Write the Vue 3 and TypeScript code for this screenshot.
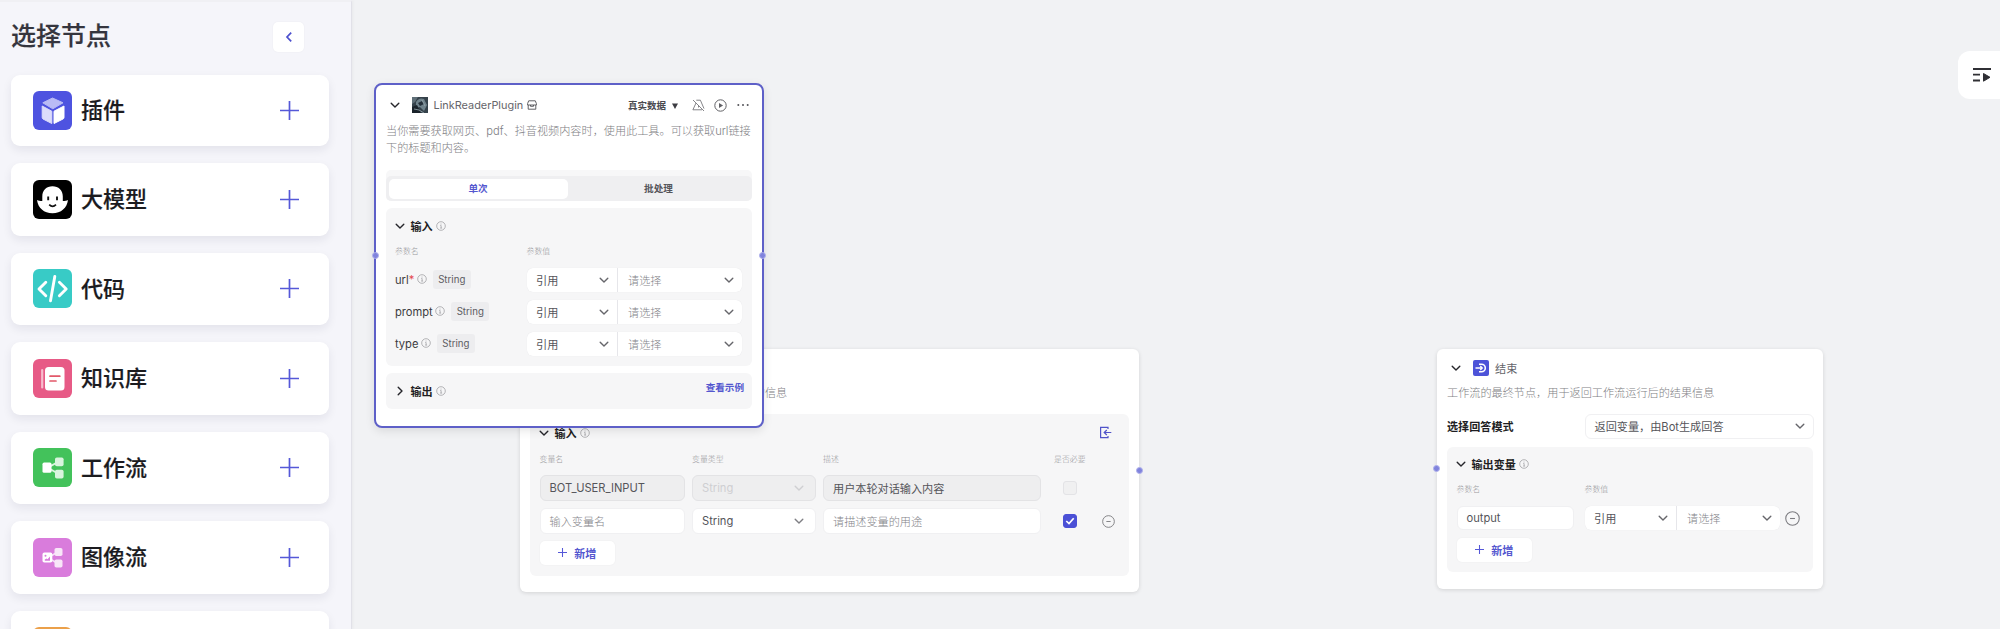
<script setup lang="ts">
import { h, type FunctionalComponent } from 'vue'

interface PaletteItem {
  kind: string
  label: string
}

const palette: PaletteItem[] = [
  { kind: 'plugin', label: '插件' },
  { kind: 'llm', label: '大模型' },
  { kind: 'code', label: '代码' },
  { kind: 'knowledge', label: '知识库' },
  { kind: 'workflow', label: '工作流' },
  { kind: 'imageflow', label: '图像流' },
  { kind: 'other', label: '' },
]

const params: string[] = ['url', 'prompt', 'type']

const Chevron: FunctionalComponent<{ size?: number }> = (props) =>
  h('svg', { width: props.size ?? 10, height: props.size ?? 10, viewBox: '0 0 10 10', fill: 'none' }, [
    h('path', {
      d: 'M1.2 3.2 5 7l3.8-3.8',
      stroke: 'currentColor',
      'stroke-width': 1.4,
      'stroke-linecap': 'round',
      'stroke-linejoin': 'round',
    }),
  ])
Chevron.props = ['size']

const Info: FunctionalComponent = () =>
  h('svg', { width: 10, height: 10, viewBox: '0 0 10 10', fill: 'none', stroke: '#9c9ca0', 'stroke-width': 0.75 }, [
    h('circle', { cx: 5, cy: 5, r: 4.3 }),
    h('path', { d: 'M4.3 4.5H5.1V7M4.2 7.1h1.9M5 2.6v.9' }),
  ])

const Minus: FunctionalComponent<{ size?: number }> = (props) =>
  h('svg', { width: props.size ?? 13, height: props.size ?? 13, viewBox: '0 0 14 14', fill: 'none', stroke: '#7c7c80', 'stroke-width': 1 }, [
    h('circle', { cx: 7, cy: 7, r: 6.3 }),
    h('path', { d: 'M4.7 7h4.6' }),
  ])
Minus.props = ['size']

const Plus: FunctionalComponent<{ size?: number }> = (props) =>
  h('svg', { width: props.size ?? 9, height: props.size ?? 9, viewBox: '0 0 18 18', fill: 'none', stroke: '#5558d8' }, [
    h('path', { d: 'M9 0v18M0 9h18', 'stroke-width': (props.size ?? 9) > 12 ? 1.6 : 2.1 }),
  ])
Plus.props = ['size']
</script>

<template>
  <div class="app">
    <aside class="sidebar">
      <header class="side-head">
        <h1>选择节点</h1>
        <button class="collapse" type="button">
          <svg width="8" height="12" viewBox="0 0 8 12" fill="none">
            <path d="M6.2 1.6 2 6l4.2 4.4" stroke="#4d50ce" stroke-width="1.7" />
          </svg>
        </button>
      </header>
      <div class="palette">
        <div v-for="item in palette" :key="item.kind" class="entry">
          <svg class="entry-icon" viewBox="0 0 39 39">
            <g v-if="item.kind === 'plugin'">
              <rect width="39" height="39" rx="6" fill="#4e53e0" />
              <path d="M19.5 7 30 11.8 19.8 17.8 9.8 11.8Z" fill="#b9bbf5" stroke="#b9bbf5" stroke-width="1" stroke-linejoin="round" />
              <path d="M9.2 15 18.8 20.2V32.5L10 28Q9.2 27.5 9.2 26.5Z" fill="#dcdcfb" stroke="#dcdcfb" stroke-width="1" stroke-linejoin="round" />
              <path d="M31 15 21 20.2V32.5L30 28Q31 27.5 31 26.5Z" fill="#fff" stroke="#fff" stroke-width="1" stroke-linejoin="round" />
            </g>
            <g v-else-if="item.kind === 'llm'">
              <rect width="39" height="39" rx="6" fill="#000" />
              <path d="M9.3 21V16.5C9.3 10.2 13.5 6.2 19.5 6.2S29.8 10.2 29.8 16.5V21C32 21 33.7 20.6 35 20C34 28 28 33.2 19.5 33.2S5 28 4 20C5.4 20.6 7.3 21 9.3 21Z" fill="#fff" />
              <path d="M15.2 16.6v3.6M24 16.6v3.6" stroke="#111" stroke-width="1.9" />
              <path d="M16.2 24.6Q19.6 28 23 24.6" stroke="#111" stroke-width="1.6" fill="none" />
            </g>
            <g v-else-if="item.kind === 'code'">
              <rect width="39" height="39" rx="6" fill="#38cbc6" />
              <path d="M12.8 13.3 6 20l6.8 6.7M26.4 13.3 33.2 20l-6.8 6.7M21.8 7.5 17.5 31.8" fill="none" stroke="#fff" stroke-width="2.9" stroke-linecap="round" stroke-linejoin="round" />
            </g>
            <g v-else-if="item.kind === 'knowledge'">
              <rect width="39" height="39" rx="6" fill="#e75a86" />
              <path d="M9.2 11v17.5" stroke="#f8bccd" stroke-width="2.2" stroke-linecap="round" />
              <rect x="12" y="8" width="19.5" height="23.5" rx="3.5" fill="#fff" />
              <path d="M17 17.2h9.8M17 22h6" stroke="#e2586a" stroke-width="1.7" stroke-linecap="round" />
            </g>
            <g v-else-if="item.kind === 'workflow'">
              <rect width="39" height="39" rx="6" fill="#43c25b" />
              <path d="M17 18.5 24 14.5M17 21 24 25" stroke="#dcf5e0" stroke-width="2" />
              <rect x="22" y="9.5" width="8.6" height="8.8" rx="1.8" fill="#d9f4de" />
              <rect x="22" y="21.8" width="8.6" height="8.8" rx="1.8" fill="#d9f4de" />
              <rect x="9.5" y="14.6" width="9" height="10.2" rx="1.6" fill="#fff" />
            </g>
            <g v-else-if="item.kind === 'imageflow'">
              <rect width="39" height="39" rx="6" fill="#d97cdc" />
              <path d="M17 18.5 24 14.5M17 21 24 25" stroke="#f6def7" stroke-width="1.7" />
              <rect x="21.5" y="10" width="8" height="8" rx="1.8" fill="#f8e6f8" />
              <rect x="21.5" y="21.5" width="8" height="8" rx="1.8" fill="#f8e6f8" />
              <rect x="9.5" y="14.6" width="9.8" height="10" rx="1.8" fill="#fff" />
              <circle cx="12.5" cy="17.8" r="1" fill="#d97cdc" />
              <path d="M11.8 22.8V21.5L13.5 20.5 14.5 21.3 17 18.5V22.8Z" fill="#d97cdc" />
            </g>
            <rect v-else width="39" height="39" rx="6" fill="#eba04a" />
          </svg>
          <span class="entry-label">{{ item.label }}</span>
          <Plus class="entry-add" :size="19" />
        </div>
      </div>
    </aside>

    <main class="canvas">
      <section class="node start">
        <div class="node-head"><Chevron class="dark" /><span class="node-title">开始</span></div>
        <p class="desc">工作流的起始节点，用于设定启动工作流需要的信息</p>
        <div class="panel">
          <div class="panel-head">
            <Chevron class="dark" /><b>输入</b><Info />
            <svg class="import" width="13" height="13" viewBox="0 0 13 13" fill="none" stroke="#5053c9" stroke-width="1.2">
              <path d="M9 3V1.3H1.6V11.7H9V10M12.3 6.5H5.5M7.8 4 5.2 6.5 7.8 9" />
            </svg>
          </div>
          <div class="vars labels">
            <span>变量名</span><span>变量类型</span><span>描述</span><span class="req">是否必要</span>
          </div>
          <div class="vars first">
            <div class="field off">BOT_USER_INPUT</div>
            <div class="field off faint">String<Chevron /></div>
            <div class="field off">用户本轮对话输入内容</div>
            <i class="check"></i>
          </div>
          <div class="vars second">
            <div class="field hint">输入变量名</div>
            <div class="field">String<Chevron /></div>
            <div class="field hint">请描述变量的用途</div>
            <i class="check on">
              <svg width="10" height="8" viewBox="0 0 10 8" fill="none"><path d="M1.3 4 4 6.6 8.7 1.3" stroke="#fff" stroke-width="1.7" /></svg>
            </i>
            <Minus class="remove" />
          </div>
          <button class="add" type="button"><Plus />新增</button>
        </div>
        <i class="port right"></i>
      </section>

      <section class="node plugin">
        <div class="node-head">
          <Chevron class="dark" />
          <svg class="avatar" width="16" height="16" viewBox="0 0 16 16">
            <rect width="16" height="16" fill="#35424b" />
            <path d="M0 0h6L3 5 0 7Z" fill="#5f6f78" />
            <path d="M4 5Q7 0 12 2L15 8 12 14 8 10 4 11Z" fill="#6f828b" />
            <path d="M6 6 10 4 12 7 8 9Z" fill="#25303a" />
            <path d="M0 10 5 8 9 16H0Z" fill="#1a232b" />
            <path d="M2 12 7 13 12 16M10 3 13 9" stroke="#9aabb1" stroke-width=".8" fill="none" />
          </svg>
          <span class="node-title">LinkReaderPlugin</span>
          <svg class="store" width="10" height="10" viewBox="0 0 10 10" fill="none" stroke="#505055" stroke-width=".9">
            <path d="M1.7 .8h6.6L9.4 3.6V5H.6V3.6ZM1.2 5V9.2H8.8V5M3.5 5v1.3h3V5" stroke-linejoin="round" />
          </svg>
          <span class="source">真实数据</span>
          <svg class="tri" width="6" height="6" viewBox="0 0 6 6"><path d="M0 .5H6L3 6Z" fill="#3c3c42" /></svg>
          <svg class="mute" width="13" height="13" viewBox="0 0 13 13" fill="none" stroke="#77777c" stroke-width=".9">
            <path d="M1 1 12 12M4 4 .9 10.8H10M4.3 1.2H8.4L12 9.600M6.500 6.500V8.500" />
          </svg>
          <svg class="play" width="13" height="13" viewBox="0 0 13 13" fill="none" stroke="#606065" stroke-width="1">
            <circle cx="6.5" cy="6.5" r="5.7" /><path d="M5 4.100 9.100 6.500 5 8.900Z" fill="#606065" stroke="none" />
          </svg>
          <svg class="more" width="12" height="4" viewBox="0 0 12 4" fill="#55555a">
            <circle cx="1.3" cy="2" r="1" /><circle cx="6" cy="2" r="1" /><circle cx="10.7" cy="2" r="1" />
          </svg>
        </div>
        <p class="desc">当你需要获取网页、pdf、抖音视频内容时，使用此工具。可以获取url链接下的标题和内容。</p>
        <div class="tabs-wrap">
          <div class="tabs"><span class="tab active">单次</span><span class="tab">批处理</span></div>
        </div>
        <div class="panel inputs">
          <div class="panel-head"><Chevron class="dark" /><b>输入</b><Info /></div>
          <div class="pair labels"><span>参数名</span><span>参数值</span></div>
          <div v-for="name in params" :key="name" class="pair param">
            <div class="param-name">
              <span>{{ name }}<em v-if="name === 'url'">*</em></span><Info /><span class="tag">String</span>
            </div>
            <div class="selects">
              <div class="select mode">引用<Chevron /></div>
              <div class="select value">请选择<Chevron /></div>
            </div>
          </div>
        </div>
        <div class="panel outputs">
          <Chevron class="dark closed" /><b>输出</b><Info />
          <a class="example">查看示例</a>
        </div>
        <i class="port left"></i>
        <i class="port right"></i>
      </section>

      <section class="node end">
        <div class="node-head">
          <Chevron class="dark" />
          <svg class="avatar" width="16" height="16" viewBox="0 0 16 16" fill="none" stroke="#fff">
            <rect width="16" height="16" rx="2" fill="#4d53d8" stroke="none" />
            <path d="M6 4.2H8.5A3.8 3.8 0 0 1 8.5 11.8H6" stroke-width="1.6" />
            <path d="M2.5 8H9M7.300 6 9.300 8 7.300 10" stroke-width="1.3" />
          </svg>
          <span class="node-title">结束</span>
        </div>
        <p class="desc">工作流的最终节点，用于返回工作流运行后的结果信息</p>
        <div class="answer">
          <b>选择回答模式</b>
          <div class="answer-select">返回变量，由Bot生成回答<Chevron /></div>
        </div>
        <div class="panel">
          <div class="panel-head"><Chevron class="dark" /><b>输出变量</b><Info /></div>
          <div class="pair labels"><span>参数名</span><span>参数值</span></div>
          <div class="pair out">
            <div class="field">output</div>
            <div class="selects">
              <div class="select mode">引用<Chevron /></div>
              <div class="select value">请选择<Chevron /></div>
            </div>
            <Minus class="remove" :size="15" />
          </div>
          <button class="add" type="button"><Plus />新增</button>
        </div>
        <i class="port left"></i>
      </section>

      <button class="dock" type="button">
        <svg width="20" height="16" viewBox="0 0 20 16" fill="none" stroke="#303035" stroke-width="1.9">
          <path d="M1 2h18M1 7.6h7M1 13.5h7" />
          <path d="M11.5 6.5 18 10.3 11.5 14.2Z" fill="#303035" stroke-width="1" stroke-linejoin="round" />
        </svg>
      </button>
    </main>
  </div>
</template>

<style>
body {
  overflow: hidden;
  background: #fff;
}
</style>

<style scoped>
* {
  box-sizing: border-box;
}
.app {
  display: flex;
  width: 2000px;
  height: 629px;
  overflow: hidden;
  background: #f1f2f4;
  font-family: Inter, "Noto Sans CJK SC", sans-serif;
  color: #55555a;
}
button {
  border: 0;
  padding: 0;
  font: inherit;
}
svg {
  display: block;
  flex: none;
}
.sidebar {
  flex: none;
  width: 352px;
  height: 630px;
  border-top: 2px solid #f0f0f4;
  border-right: 1px solid #e1e1e8;
  background: #f5f5fa;
  box-shadow: 1px 0 3px rgba(0, 0, 0, 0.04);
}
.side-head {
  display: flex;
  align-items: flex-start;
  justify-content: space-between;
  height: 73px;
  padding: 20px 47px 0 11px;
}
h1 {
  margin: -1.5px 0 0;
  font-size: 25px;
  font-weight: 500;
  line-height: 30px;
  color: #35353e;
  -webkit-text-stroke: 0.2px currentColor;
}
.collapse {
  display: flex;
  align-items: center;
  justify-content: center;
  width: 31px;
  height: 30px;
  border-radius: 5px;
  background: #fff;
  box-shadow: 0 0 2px rgba(0, 0, 0, 0.05);
}
.palette {
  display: flex;
  flex-direction: column;
  gap: 17px;
  padding-left: 10.5px;
}
.entry {
  display: flex;
  flex: none;
  align-items: center;
  width: 318px;
  height: 72.5px;
  padding: 0 30px 0 22.5px;
  border-radius: 9px;
  background: #fff;
  box-shadow: 0 4px 10px rgba(30, 30, 60, 0.08);
}
.entry:first-child {
  height: 71.2px;
  padding-bottom: 1px;
}
.entry-icon {
  width: 39px;
  height: 39px;
}
.entry-label {
  margin-left: 9px;
  font-size: 22px;
  font-weight: 500;
  line-height: 30px;
  color: #1b1b1f;
  -webkit-text-stroke: 0.2px currentColor;
}
.entry-add {
  margin-left: auto;
}
.canvas {
  position: relative;
  flex: 1;
}
.node {
  position: absolute;
  border-radius: 6px;
  background: #fff;
  box-shadow: 0 1px 4px rgba(0, 0, 0, 0.13);
  font-size: 11.15px;
}
.start {
  left: 168px;
  top: 349px;
  width: 619px;
  height: 243px;
  padding: 9px 10px 0;
}
.plugin {
  left: 22px;
  top: 83px;
  width: 390px;
  height: 345px;
  padding: 11px 10px 0;
  border: 2px solid #5e60c8;
  border-radius: 8px;
  box-shadow: 0 3px 10px rgba(0, 0, 0, 0.1);
}
.end {
  left: 1085px;
  top: 349px;
  width: 386px;
  height: 240px;
  padding: 10px 10px 0;
}
.node-head {
  display: flex;
  align-items: center;
  height: 18px;
  padding-left: 4px;
}
.dark {
  color: #26262b;
}
.avatar {
  margin-left: 11.5px;
}
.node-title {
  margin-left: 6px;
  font-size: 11.15px;
  color: #65656a;
}
.plugin .node-title {
  font-size: 10.9px;
}
.end .node-title {
  margin-left: 6.5px;
}
.store {
  margin-left: 4px;
}
.source {
  margin-left: auto;
  font-size: 9.5px;
  font-weight: 600;
  color: #4a4a50;
}
.tri {
  margin: 1px 0 0 6px;
}
.mute {
  margin-left: 14px;
}
.play {
  margin-left: 9px;
}
.more {
  margin: 0 3px 0 10px;
}
.desc {
  margin: 0;
  font-weight: 300;
  line-height: 17.5px;
  color: #808084;
  white-space: nowrap;
}
.start .desc {
  margin-top: 9px;
  padding-left: 1px;
}
.end .desc {
  margin-top: 8px;
}
.plugin .desc {
  padding-top: 8.5px;
  white-space: normal;
  width: 370px;
}
.tabs-wrap {
  height: 31px;
  margin-top: 12.5px;
  padding-top: 6px;
  border-radius: 5px;
  background: #f7f7f8;
}
.tabs {
  display: flex;
  height: 25px;
  padding: 3px 2.5px 2.5px;
  border-radius: 5px;
  background: #efeff1;
}
.tab {
  flex: 1;
  font-size: 9.6px;
  font-weight: 600;
  line-height: 19px;
  text-align: center;
  border-radius: 5px;
}
.active {
  flex: none;
  width: 179px;
  background: #fff;
  color: #5457cf;
}
.panel {
  border-radius: 6px;
  background: #f6f6f7;
}
.panel-head {
  display: flex;
  align-items: center;
  height: 16px;
}
b {
  font-size: 11.1px;
  font-weight: 700;
  color: #1e1e23;
}
.panel-head b {
  margin: 0 3px 0 5.5px;
}
.labels {
  font-size: 7.9px;
  font-weight: 300;
  line-height: 12px;
  color: #98989c;
}
.inputs {
  height: 158px;
  margin-top: 7px;
  padding: 10px 10px 0 9px;
}
.pair {
  display: grid;
  grid-template-columns: 131.5px 215px;
}
.inputs .labels {
  margin: 11px 0;
}
.param {
  height: 24px;
  margin-bottom: 8px;
}
.param-name {
  display: flex;
  align-items: center;
  padding-bottom: 1px;
  color: #3b3b40;
}
.param-name svg {
  margin: 0 6px 2px 2.5px;
}
em {
  font-style: normal;
  color: #e5484d;
}
.tag {
  width: 38px;
  height: 19px;
  border-radius: 3px;
  background: #ededef;
  font-size: 9.7px;
  line-height: 19px;
  text-align: center;
  color: #5c5c62;
}
.selects {
  display: flex;
  gap: 1px;
  height: 24px;
  border-radius: 6px;
  background: #e6e6ea;
  box-shadow: 0 0 1px rgba(0, 0, 0, 0.08);
}
.select {
  display: flex;
  align-items: center;
  justify-content: space-between;
  padding: 0 8px 0 9.5px;
  background: #fff;
}
.select svg,
.answer-select svg {
  color: #66666b;
}
.mode {
  width: 90px;
  border-radius: 6px 0 0 6px;
}
.end .mode {
  width: 91px;
}
.value {
  flex: 1;
  padding-left: 10.5px;
  border-radius: 0 6px 6px 0;
  font-weight: 300;
  color: #85858a;
}
.outputs {
  display: flex;
  align-items: center;
  height: 36px;
  margin-top: 7px;
  padding: 0 8px 0 9px;
}
.outputs b {
  margin: 0 3px 0 5.5px;
}
.closed {
  transform: rotate(-90deg);
}
.example {
  margin-left: auto;
  padding-bottom: 8px;
  font-size: 9.6px;
  font-weight: 600;
  color: #5457cf;
}
.start .panel {
  height: 162px;
  margin: 11.5px 0 0;
  padding: 10.5px 8px 0 9.5px;
}
.start .panel-head,
.end .panel-head {
  margin-left: -0.5px;
}
.import {
  margin: 0 9px 0 auto;
}
.vars {
  display: grid;
  grid-template-columns: 145.5px 124px 218px 14px 13px;
  column-gap: 7px;
  align-items: center;
}
.vars.labels {
  margin-top: 12.5px;
}
.req {
  margin-left: 6px;
  white-space: nowrap;
}
.first {
  height: 26px;
  margin-top: 10px;
}
.second {
  height: 26px;
  margin-top: 7px;
}
.check {
  display: flex;
  align-items: center;
  justify-content: center;
  width: 14px;
  height: 14px;
  margin-left: 15px;
  border: 1px solid #e3e3e6;
  border-radius: 3px;
  background: #f0f0f1;
}
.check.on {
  border-color: #4b50d6;
  background: #4b50d6;
}
.vars .remove {
  margin-left: 33px;
}
.field {
  display: flex;
  align-items: center;
  justify-content: space-between;
  height: 26px;
  padding: 0 11px 0 9px;
  border: 1px solid #f0f0f2;
  border-radius: 6px;
  background: #fff;
}
.field svg {
  color: #7f7f84;
}
.off {
  border-color: #e3e3e5;
  background: #eeeeef;
}
.faint,
.faint svg {
  color: #cfcfd2;
}
.hint {
  font-weight: 300;
  color: #85858a;
}
.add {
  display: flex;
  align-items: center;
  justify-content: center;
  gap: 7.5px;
  width: 75px;
  height: 24px;
  margin-top: 6.5px;
  border-radius: 5px;
  background: #fff;
  box-shadow: 0 0 2px rgba(0, 0, 0, 0.05);
  font-size: 11.1px;
  font-weight: 600;
  color: #5457cf;
}
.answer {
  display: grid;
  grid-template-columns: 137.5px 229px;
  align-items: center;
  height: 25px;
  margin-top: 11px;
}
.answer-select {
  display: flex;
  align-items: center;
  justify-content: space-between;
  height: 25px;
  padding: 0 8px 0 9px;
  border: 1px solid #f0f0f2;
  border-radius: 6px;
}
.end .panel {
  height: 125px;
  margin-top: 8px;
  padding: 9px 9px 0 9.5px;
}
.end .labels {
  margin-top: 11px;
}
.end .pair {
  grid-template-columns: 128px 195.5px 15px;
}
.end .out {
  align-items: center;
  height: 24px;
  margin-top: 11.5px;
}
.end .field {
  width: 117px;
  height: 24px;
}
.end .remove {
  margin-left: 4.5px;
}
.end .add {
  margin-top: 7.5px;
}
.port {
  position: absolute;
  width: 7px;
  height: 7px;
  border: 1px solid #b0b2ec;
  border-radius: 50%;
  background: #8083dd;
}
.plugin .port {
  top: 167px;
}
.plugin .left {
  left: -4.5px;
}
.plugin .right {
  right: -4px;
}
.start .right {
  top: 117.5px;
  right: -4px;
}
.end .left {
  top: 116px;
  left: -4px;
}
.dock {
  position: absolute;
  top: 51px;
  right: 0;
  display: flex;
  align-items: center;
  width: 42px;
  height: 48px;
  padding-left: 14px;
  border-radius: 12px 0 0 12px;
  background: #fff;
}
</style>
